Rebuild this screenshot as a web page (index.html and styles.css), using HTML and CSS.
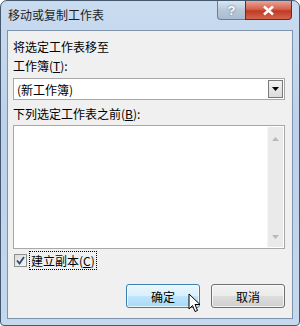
FILE: index.html
```html
<!DOCTYPE html>
<html lang="zh-CN">
<head>
    <meta charset="UTF-8">
    <title>移动或复制工作表</title>
    <link rel="stylesheet" href="styles.css">
</head>
<body>

    <div class="window">
        <!-- Title bar -->
        <div class="titlebar">
            <span class="title">移动或复制工作表</span>
            <div class="caption-btns">
                <div class="cap-btn help">?</div>
                <div class="cap-btn close">
                    <svg width="13" height="11" viewBox="0 0 13 11">
                        <path d="M2 1.5 L11 9.5 M11 1.5 L2 9.5" stroke="#fff" stroke-width="2.6" fill="none"/>
                    </svg>
                </div>
            </div>
        </div>

        <!-- Dialog body -->
        <div class="client">
            <p class="label">将选定工作表移至</p>
            <p class="label">工作簿(<u>T</u>):</p>
            <div class="combo">
                <span class="combo-text">(新工作簿)</span>
                <div class="combo-btn">
                    <svg width="7" height="4" viewBox="0 0 7 4"><path d="M0 0 H7 L3.5 4 Z" fill="#000"/></svg>
                </div>
            </div>
            <p class="label list-label">下列选定工作表之前(<u>B</u>):</p>
            <div class="listbox">
                <div class="list-area"></div>
                <div class="scrollbar">
                    <svg width="7" height="4" viewBox="0 0 7 4"><path d="M0 4 H7 L3.5 0 Z" fill="#b8b8b8"/></svg>
                    <svg width="7" height="4" viewBox="0 0 7 4"><path d="M0 0 H7 L3.5 4 Z" fill="#b8b8b8"/></svg>
                </div>
            </div>
            <div class="check-row">
                <div class="checkbox">
                    <svg width="9" height="9" viewBox="0 0 9 9"><path d="M1 4.5 L3.5 7.5 L8 1" stroke="#2a4a7a" stroke-width="1.8" fill="none"/></svg>
                </div>
                <span class="check-label">建立副本(<u>C</u>)</span>
            </div>
            <div class="buttons">
                <button class="btn hot">确定</button>
                <button class="btn">取消</button>
                <svg class="cursor" width="13" height="20" viewBox="0 0 13 20">
                    <path d="M1 1 L1 16 L4.5 12.5 L7 18.5 L9.5 17.5 L7 11.5 L12 11.5 Z" fill="#fff" stroke="#000" stroke-width="1"/>
                </svg>
            </div>
        </div>
    </div>

</body>
</html>
```

FILE: styles.css
```css
* {
    margin: 0;
    padding: 0;
    box-sizing: border-box;
}

body {
    font-family: "Noto Sans CJK SC", "Liberation Sans", sans-serif;
    font-size: 12px;
    color: #000;
    background-color: #fff;
}

.window {
    width: 300px;
    height: 326px;
    border: 1px solid #46586e;
    border-radius: 7px 7px 4px 4px;
    background: linear-gradient(to bottom, #c9dbef, #bcd1ea 40%, #c4d8ee);
    display: flex;
    flex-direction: column;
    overflow: hidden;
}

/* Title bar */
.titlebar {
    height: 29px;
    display: flex;
    justify-content: space-between;
    align-items: flex-start;
}

.title {
    margin: 5px 0 0 7px;
    line-height: 17px;
    color: #1e1e1e;
}

.caption-btns {
    display: flex;
    margin-right: 7px;
}

.cap-btn {
    height: 19px;
    display: flex;
    justify-content: center;
    align-items: center;
    border: 1px solid #6f7f93;
    border-top: none;
}

.help {
    width: 28px;
    border-radius: 0 0 0 4px;
    border-right: none;
    background: linear-gradient(to bottom, #dbe5f1, #b8c8da 50%, #a9bcd2);
    color: #fff;
    font-family: "Liberation Sans", sans-serif;
    font-weight: bold;
    font-size: 13px;
    text-shadow: 0 0 2px #4a5a70;
}

.close {
    width: 47px;
    border-radius: 0 0 4px 0;
    border-color: #6a2a22;
    background: linear-gradient(to bottom, #e8a597, #d6614d 45%, #c13a23 55%, #d4664c);
}

/* Dialog body */
.client {
    flex: 1;
    margin: 0 6px 6px 6px;
    border: 1px solid #7f93ab;
    background-color: #f0f0f0;
    padding: 8px 7px 0 5px;
    display: flex;
    flex-direction: column;
}

.label {
    line-height: 16px;
    margin-bottom: 3px;
}

.label u {
    text-decoration-thickness: 1px;
}

.combo {
    height: 22px;
    margin-top: 1px;
    border: 1px solid #a8a8a8;
    background-color: #fff;
    display: flex;
    align-items: center;
    justify-content: space-between;
    padding: 0 1px 0 3px;
}

.combo-btn {
    width: 15px;
    height: 18px;
    border: 1px solid #7a7a7a;
    background: linear-gradient(to bottom, #f2f2f2, #dcdcdc);
    display: flex;
    justify-content: center;
    align-items: center;
}

.list-label {
    margin-top: 6px;
}

.listbox {
    height: 124px;
    border: 1px solid #a8a8a8;
    background-color: #fff;
    display: flex;
    padding: 1px;
}

.list-area {
    flex: 1;
}

.scrollbar {
    width: 16px;
    background-color: #eaeaea;
    border-left: 1px solid #f5f5f5;
    display: flex;
    flex-direction: column;
    justify-content: space-between;
    align-items: center;
    padding: 10px 0 8px;
}

.check-row {
    display: flex;
    align-items: center;
    margin-top: 1px;
    height: 20px;
}

.checkbox {
    width: 13px;
    height: 13px;
    margin-left: 1px;
    border: 1px solid #8e8f8f;
    background: linear-gradient(to bottom right, #dcdcdc, #f6f6f6);
    display: flex;
    justify-content: center;
    align-items: center;
}

.check-label {
    margin-left: 2px;
    padding: 0 1px;
    line-height: 17px;
    border: 1px dotted #000;
}

.buttons {
    display: flex;
    justify-content: flex-end;
    gap: 11px;
    margin-top: 14px;
    position: relative;
}

.btn {
    width: 74px;
    height: 24px;
    font-family: inherit;
    font-size: 12px;
    color: #000;
    border: 1px solid #707070;
    border-radius: 3px;
    background: linear-gradient(to bottom, #f2f2f2 0%, #ebebeb 50%, #dddddd 51%, #cfcfcf 100%);
    box-shadow: inset 0 0 0 1px rgba(255, 255, 255, 0.7);
}

.btn.hot {
    border-color: #3c7fb1;
    background: linear-gradient(to bottom, #eaf6fd 0%, #d9f0fc 50%, #bee6fd 51%, #a7d9f5 100%);
}

.cursor {
    position: absolute;
    left: 175px;
    top: 9px;
}
```
